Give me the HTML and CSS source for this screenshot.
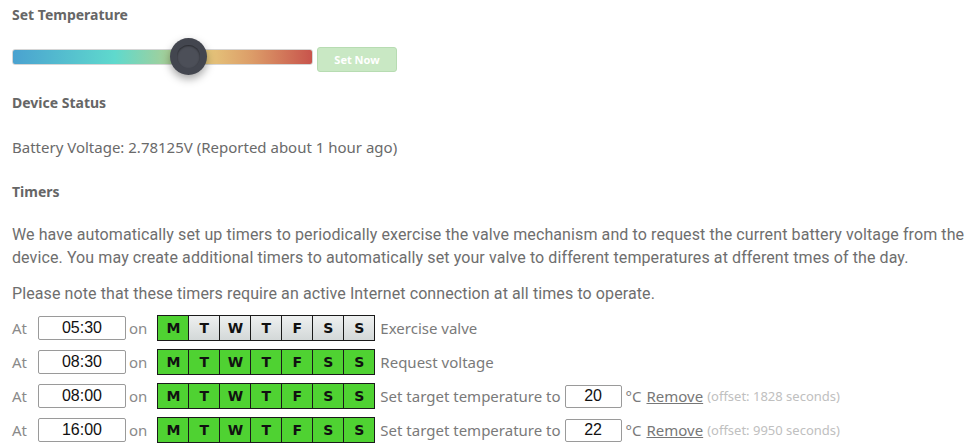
FILE: index.html
```html
<!DOCTYPE html>
<html>
<head>
<meta charset="utf-8">
<link rel="stylesheet" href="styles.css">
</head>
<body>
<div class="page">
  <h3 class="heading first">Set Temperature</h3>
  <div class="slider-row">
    <div class="track">
      <div class="knob"><div class="knob-inner"></div></div>
    </div>
    <button class="set-now">Set Now</button>
  </div>

  <h3 class="heading">Device Status</h3>
  <p class="status">Battery Voltage: 2.78125V (Reported about 1 hour ago)</p>

  <h3 class="heading">Timers</h3>
  <p class="para">We have automatically set up timers to periodically exercise the valve mechanism and to request the current battery voltage from the device. You may create additional timers to automatically set your valve to different temperatures at dfferent tmes of the day.</p>
  <p class="para note">Please note that these timers require an active Internet connection at all times to operate.</p>

  <div class="timers">
    <div class="timer">
      <span class="lbl">At</span>
      <input class="time" value="05:30">
      <span class="lbl on">on</span>
      <div class="days">
        <span class="day sel">M</span><span class="day">T</span><span class="day">W</span><span class="day">T</span><span class="day">F</span><span class="day">S</span><span class="day">S</span>
      </div>
      <span class="desc">Exercise valve</span>
    </div>
    <div class="timer">
      <span class="lbl">At</span>
      <input class="time" value="08:30">
      <span class="lbl on">on</span>
      <div class="days">
        <span class="day sel">M</span><span class="day sel">T</span><span class="day sel">W</span><span class="day sel">T</span><span class="day sel">F</span><span class="day sel">S</span><span class="day sel">S</span>
      </div>
      <span class="desc">Request voltage</span>
    </div>
    <div class="timer">
      <span class="lbl">At</span>
      <input class="time" value="08:00">
      <span class="lbl on">on</span>
      <div class="days">
        <span class="day sel">M</span><span class="day sel">T</span><span class="day sel">W</span><span class="day sel">T</span><span class="day sel">F</span><span class="day sel">S</span><span class="day sel">S</span>
      </div>
      <span class="desc">Set target temperature to</span>
      <input class="temp" value="20">
      <span class="desc unit">°C</span>
      <a class="remove" href="#">Remove</a>
      <span class="offset">(offset: 1828 seconds)</span>
    </div>
    <div class="timer">
      <span class="lbl">At</span>
      <input class="time" value="16:00">
      <span class="lbl on">on</span>
      <div class="days">
        <span class="day sel">M</span><span class="day sel">T</span><span class="day sel">W</span><span class="day sel">T</span><span class="day sel">F</span><span class="day sel">S</span><span class="day sel">S</span>
      </div>
      <span class="desc">Set target temperature to</span>
      <input class="temp" value="22">
      <span class="desc unit">°C</span>
      <a class="remove" href="#">Remove</a>
      <span class="offset">(offset: 9950 seconds)</span>
    </div>
  </div>
</div>
</body>
</html>
```

FILE: styles.css
```css
html, body {
  margin: 0;
  padding: 0;
  background: #fff;
  overflow: hidden;
}
body {
  font-family: "Noto Sans", "Open Sans", sans-serif;
  color: #6a6a6a;
}
.page {
  padding: 4px 4px 0 12px;
}
.heading {
  margin: 0;
  font-size: 14px;
  font-weight: bold;
  color: #666;
  line-height: 22px;
}
.slider-row {
  display: flex;
  align-items: center;
  height: 38px;
  margin: 12px 0 16px 0;
}
.track {
  position: relative;
  width: 299px;
  height: 14px;
  border: 1px solid #d6d6d6;
  border-radius: 3px;
  background: linear-gradient(to right, #4aa2d0 0%, #5fd9cd 34%, #a6cf98 52%, #e5c47a 66%, #dc9c68 80%, #c8544c 100%);
}
.knob {
  position: absolute;
  left: 157px;
  top: -12px;
  width: 37px;
  height: 37px;
  border-radius: 50%;
  background: #43464f;
  box-shadow: 0 4px 8px rgba(0,0,0,0.35);
  display: flex;
  align-items: center;
  justify-content: center;
}
.knob-inner {
  width: 23px;
  height: 23px;
  border-radius: 50%;
  background: #4c4f58;
  box-shadow: inset 0 1px 2px rgba(0,0,0,0.5);
}
.set-now {
  margin-left: 4px;
  width: 80px;
  height: 25px;
  background: #c9e8c4;
  border: 1px solid #b7dcb2;
  border-radius: 3px;
  color: #fff;
  font-family: "Noto Sans", sans-serif;
  font-weight: bold;
  font-size: 11px;
  padding: 0;
  margin-top: 5px;
}
.status {
  margin: 22px 0 23px 0;
  font-size: 15px;
  line-height: 22px;
}
.para {
  margin: 20px 0 0 0;
  font-family: "Roboto", "Noto Sans", sans-serif;
  font-size: 16px;
  letter-spacing: 0.1px;
  line-height: 23px;
  color: #6e6e6e;
}
.para.note {
  margin-top: 13px;
}
.timers {
  margin-top: 10px;
  display: flex;
  flex-direction: column;
  gap: 8px;
}
.timer {
  display: flex;
  align-items: center;
  height: 26px;
  font-size: 15px;
}
.lbl {
  width: 26px;
  color: #8a8a8a;
}
.lbl.on {
  width: auto;
  margin: 0 10px 0 3px;
}
input {
  font-family: "Liberation Sans", Arial, sans-serif;
  font-size: 16px;
  color: #111;
  text-align: center;
  border: 1px solid #9a9a9a;
  border-radius: 2px;
  padding: 0;
  box-sizing: border-box;
  background: #fff;
}
.time {
  width: 88px;
  height: 24px;
}
.temp {
  width: 57px;
  height: 23px;
  margin-left: 4px;
}
.days {
  display: flex;
  border: 1px solid #1a1a1a;
  height: 24px;
}
.day {
  width: 30px;
  display: flex;
  align-items: center;
  justify-content: center;
  font-family: "DejaVu Sans", sans-serif;
  font-weight: bold;
  font-size: 14px;
  color: #111;
  background: linear-gradient(#eef0f0, #d3d8d8);
  border-left: 1px solid #1a1a1a;
}
.day:first-child {
  border-left: none;
}
.day.sel {
  background: #4fd232;
}
.desc {
  margin-left: 5px;
  color: #7a7a7a;
}
.desc.unit {
  margin-left: 4px;
}
.remove {
  margin-left: 5px;
  color: #777;
  text-decoration: underline;
}
.offset {
  margin-left: 4px;
  font-size: 13px;
  color: #c0c0c0;
}
```
